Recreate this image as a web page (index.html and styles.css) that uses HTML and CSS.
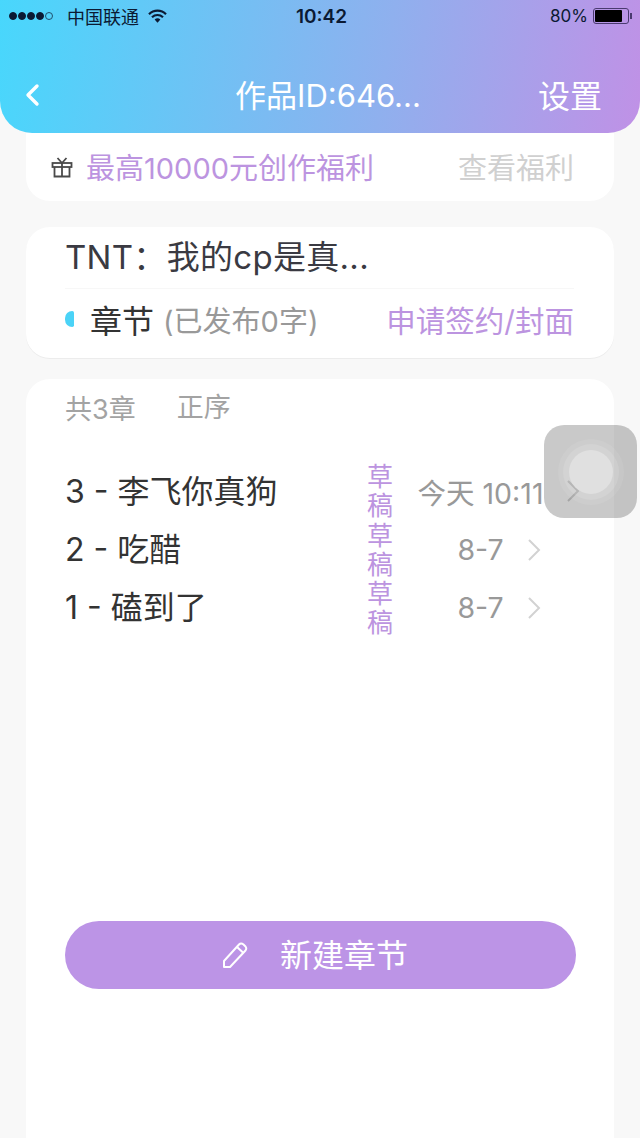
FILE: index.html
```html
<!DOCTYPE html>
<html lang="zh">
<head>
  <meta charset="UTF-8" />
  <meta name="viewport" content="width=device-width, initial-scale=1.0"/>
  <title>作品设置</title>
  <link rel="stylesheet" href="styles.css">
</head>
<body>
  <div class="page">
    <header class="top">
      <div class="status">
        <div class="status-left">
          <span class="signal"><i></i><i></i><i></i><i></i><i class="off"></i></span>
          <span class="carrier">中国联通</span>
          <svg class="wifi" width="19" height="14" viewBox="0 0 19 14">
            <path d="M1 5.2 A12 12 0 0 1 18 5.2" fill="none" stroke="#0b1a33" stroke-width="2.2"/>
            <path d="M4 8.2 A8 8 0 0 1 15 8.2" fill="none" stroke="#0b1a33" stroke-width="2.2"/>
            <path d="M6.6 10.6 A4.2 4.2 0 0 1 12.4 10.6 L9.5 13.8 Z" fill="#0b1a33"/>
          </svg>
        </div>
        <div class="clock">10:42</div>
        <div class="status-right">
          <span>80%</span>
          <span class="battery"><span class="battery-fill"></span></span>
          <span class="battery-tip"></span>
        </div>
      </div>
      <nav class="nav">
        <svg class="back" width="16" height="24" viewBox="0 0 16 24">
          <path d="M13 3 L4 12 L13 21" fill="none" stroke="#fff" stroke-width="3.4" stroke-linecap="round" stroke-linejoin="round"/>
        </svg>
        <div class="nav-title">作品ID:646...</div>
        <div class="nav-action">设置</div>
      </nav>
    </header>

    <section class="card welfare">
      <div class="welfare-left">
        <svg class="gift" width="22" height="22" viewBox="0 0 22 22">
          <g fill="none" stroke="#4a4a4a" stroke-width="1.8">
            <rect x="1.5" y="7" width="19" height="4"/>
            <path d="M3.5 11 V20.5 H18.5 V11"/>
            <path d="M11 7 V20.5"/>
            <path d="M11 7 L6.5 2 M11 7 L15.5 2"/>
          </g>
        </svg>
        <span class="purple welfare-text">最高10000元创作福利</span>
      </div>
      <span class="welfare-link">查看福利</span>
    </section>

    <section class="card info">
      <div class="book-title">TNT：我的cp是真...</div>
      <div class="chapter-bar">
        <div class="chapter-left">
          <span class="marker"></span>
          <span class="chapter-name">章节</span>
          <span class="chapter-count">(已发布0字)</span>
        </div>
        <span class="purple apply">申请签约/封面</span>
      </div>
    </section>

    <section class="card chapters">
      <div class="list-head">
        <span>共3章</span>
        <span class="order">正序</span>
      </div>
      <div class="list">
        <div class="row">
          <div class="row-name">3 - 李飞你真狗</div>
          <div class="row-status">草稿</div>
          <div class="row-time">
            <span>今天 10:11</span>
            <svg class="chevron" width="14" height="22" viewBox="0 0 14 22"><path d="M2 1 L12 11 L2 21" fill="none" stroke="#d2d2d2" stroke-width="2"/></svg>
          </div>
        </div>
        <div class="row">
          <div class="row-name">2 - 吃醋</div>
          <div class="row-status">草稿</div>
          <div class="row-time">
            <span>8-7</span>
            <svg class="chevron" width="14" height="22" viewBox="0 0 14 22"><path d="M2 1 L12 11 L2 21" fill="none" stroke="#d2d2d2" stroke-width="2"/></svg>
          </div>
        </div>
        <div class="row">
          <div class="row-name">1 - 磕到了</div>
          <div class="row-status">草稿</div>
          <div class="row-time">
            <span>8-7</span>
            <svg class="chevron" width="14" height="22" viewBox="0 0 14 22"><path d="M2 1 L12 11 L2 21" fill="none" stroke="#d2d2d2" stroke-width="2"/></svg>
          </div>
        </div>
      </div>
      <button class="new-btn">
        <svg width="26" height="28" viewBox="0 0 26 28">
          <g fill="none" stroke="#fff" stroke-width="2" stroke-linejoin="round">
            <path d="M2 20 L17 3.5 Q19 1.5 21.5 3.5 L23.5 5.5 Q25 7.5 23.5 9.5 L8 26 H2 Z"/>
            <path d="M15 6 L21.5 12"/>
          </g>
        </svg>
        <span class="new-label">新建章节</span>
      </button>
    </section>

    <div class="float-btn">
      <span class="float-ring"><span class="float-dot"></span></span>
    </div>
  </div>
</body>
</html>
```

FILE: styles.css
```css
* { box-sizing: border-box; }
body { margin: 0; background: #f8f8f8; font-family: Inter, "Noto Sans CJK SC", sans-serif; }
.page { position: relative; width: 640px; height: 1138px; overflow: hidden; display: flex; flex-direction: column; align-items: center; }

.top { width: 100%; height: 133px; flex: none; background: linear-gradient(98deg, #48d7fc 0%, #8fb0ee 60%, #c091e6 100%); border-radius: 0 0 32px 32px; }
.status { height: 40px; display: flex; align-items: center; justify-content: space-between; padding: 0 8px 8px 9px; color: #0b1a33; position: relative; }
.status-left { display: flex; align-items: center; }
.signal { display: flex; gap: 1px; margin-right: 14px; }
.signal i { width: 8px; height: 8px; border-radius: 50%; background: #0b1a33; border: 1px solid #0b1a33; }
.signal i.off { background: none; border-color: #20506e; }
.carrier { font-size: 18px; }
.wifi { margin-left: 9px; }
.clock { position: absolute; left: 0; right: 0; top: 5px; line-height: 24px; text-align: center; font-size: 19px; font-weight: 600; padding-left: 3px; }
.status-right { display: flex; align-items: center; font-size: 17px; }
.battery { width: 36px; height: 16px; margin-left: 5px; border: 1px solid #4a3a70; border-radius: 3px; padding: 1px; }
.battery-fill { display: block; width: 27px; height: 100%; background: #000; border-radius: 1px; }
.battery-tip { width: 2px; height: 6px; background: #4a3a70; margin-left: 1px; }

.nav { height: 93px; padding: 35px 38px 0 24px; display: flex; justify-content: space-between; color: #fff; position: relative; }
.back { margin-top: 8px; }
.nav-title { position: absolute; left: 0; right: 0; padding-left: 16px; text-align: center; font-size: 31px; line-height: 42px; }
.nav-action { font-size: 32px; line-height: 44px; }

.card { width: 588px; background: #fff; border-radius: 24px; flex: none; }
.purple { color: #bc94e0; font-size: 29px; }
.apply { font-size: 29.5px; }

.welfare { height: 68px; border-radius: 0 0 24px 24px; display: flex; align-items: center; justify-content: space-between; padding: 0 40px 0 25px; }
.welfare-left { display: flex; align-items: center; gap: 13px; }
.welfare-text { margin-bottom: 2px; }
.welfare-link { color: #d0d0d0; font-size: 29px; margin-bottom: 2px; }

.info { margin-top: 26px; height: 131px; padding: 0 40px; box-shadow: 0 1px 0 #ececec; }
.book-title { height: 62px; line-height: 60px; margin-left: -1px; font-size: 33px; letter-spacing: 0.3px; color: #3a3a42; border-bottom: 1px solid #f7f7f7; }
.chapter-bar { height: 60px; display: flex; align-items: center; justify-content: space-between; }
.chapter-left { display: flex; align-items: center; }
.marker { width: 9px; height: 16px; background: #4bd3f7; border-radius: 8px 2px 2px 8px; margin-left: -1px; margin-right: 16px; }
.chapter-name { font-size: 32px; color: #333; margin-right: 9px; }
.chapter-count { font-size: 29px; color: #999; }

.chapters { margin-top: 21px; flex: 1; border-radius: 24px 24px 0 0; padding-top: 8px; }
.list-head { height: 40px; display: flex; align-items: center; padding-left: 39px; font-size: 27px; color: #a3a3a3; }
.order { margin-left: 41px; margin-top: -4px; }
.list { margin-top: 35px; }
.row { height: 58.4px; display: flex; align-items: center; padding-left: 39px; padding-right: 9px; }
.row-name { flex: 1; font-size: 32px; color: #333; white-space: nowrap; margin-bottom: 5px; }
.row-status { width: 26px; font-size: 26px; line-height: 29px; color: #bc94e0; }
.row-time { width: 212px; display: flex; align-items: center; justify-content: center; gap: 23px; font-size: 28.5px; color: #999; white-space: nowrap; }

.new-btn { display: flex; align-items: center; justify-content: center; gap: 32px; width: 511px; height: 68px; margin: 284px 0 0 39px; padding: 0 8px 0 0; background: #bc94e6; border: none; border-radius: 34px; color: #fff; font-family: inherit; font-size: 32px; }
.new-btn svg { margin-left: -3px; }
.new-label { padding-bottom: 4px; }

.float-btn { position: absolute; left: 544px; top: 425px; width: 93px; height: 93px; border-radius: 20px; background: rgba(0, 0, 0, 0.21); display: flex; align-items: center; justify-content: center; }
.float-ring { width: 66px; height: 66px; border-radius: 50%; background: rgba(255, 255, 255, 0.08); display: flex; align-items: center; justify-content: center; }
.float-dot { width: 44px; height: 44px; border-radius: 50%; background: #e0e0e0; box-shadow: 0 0 0 6px rgba(255, 255, 255, 0.12); }
```
